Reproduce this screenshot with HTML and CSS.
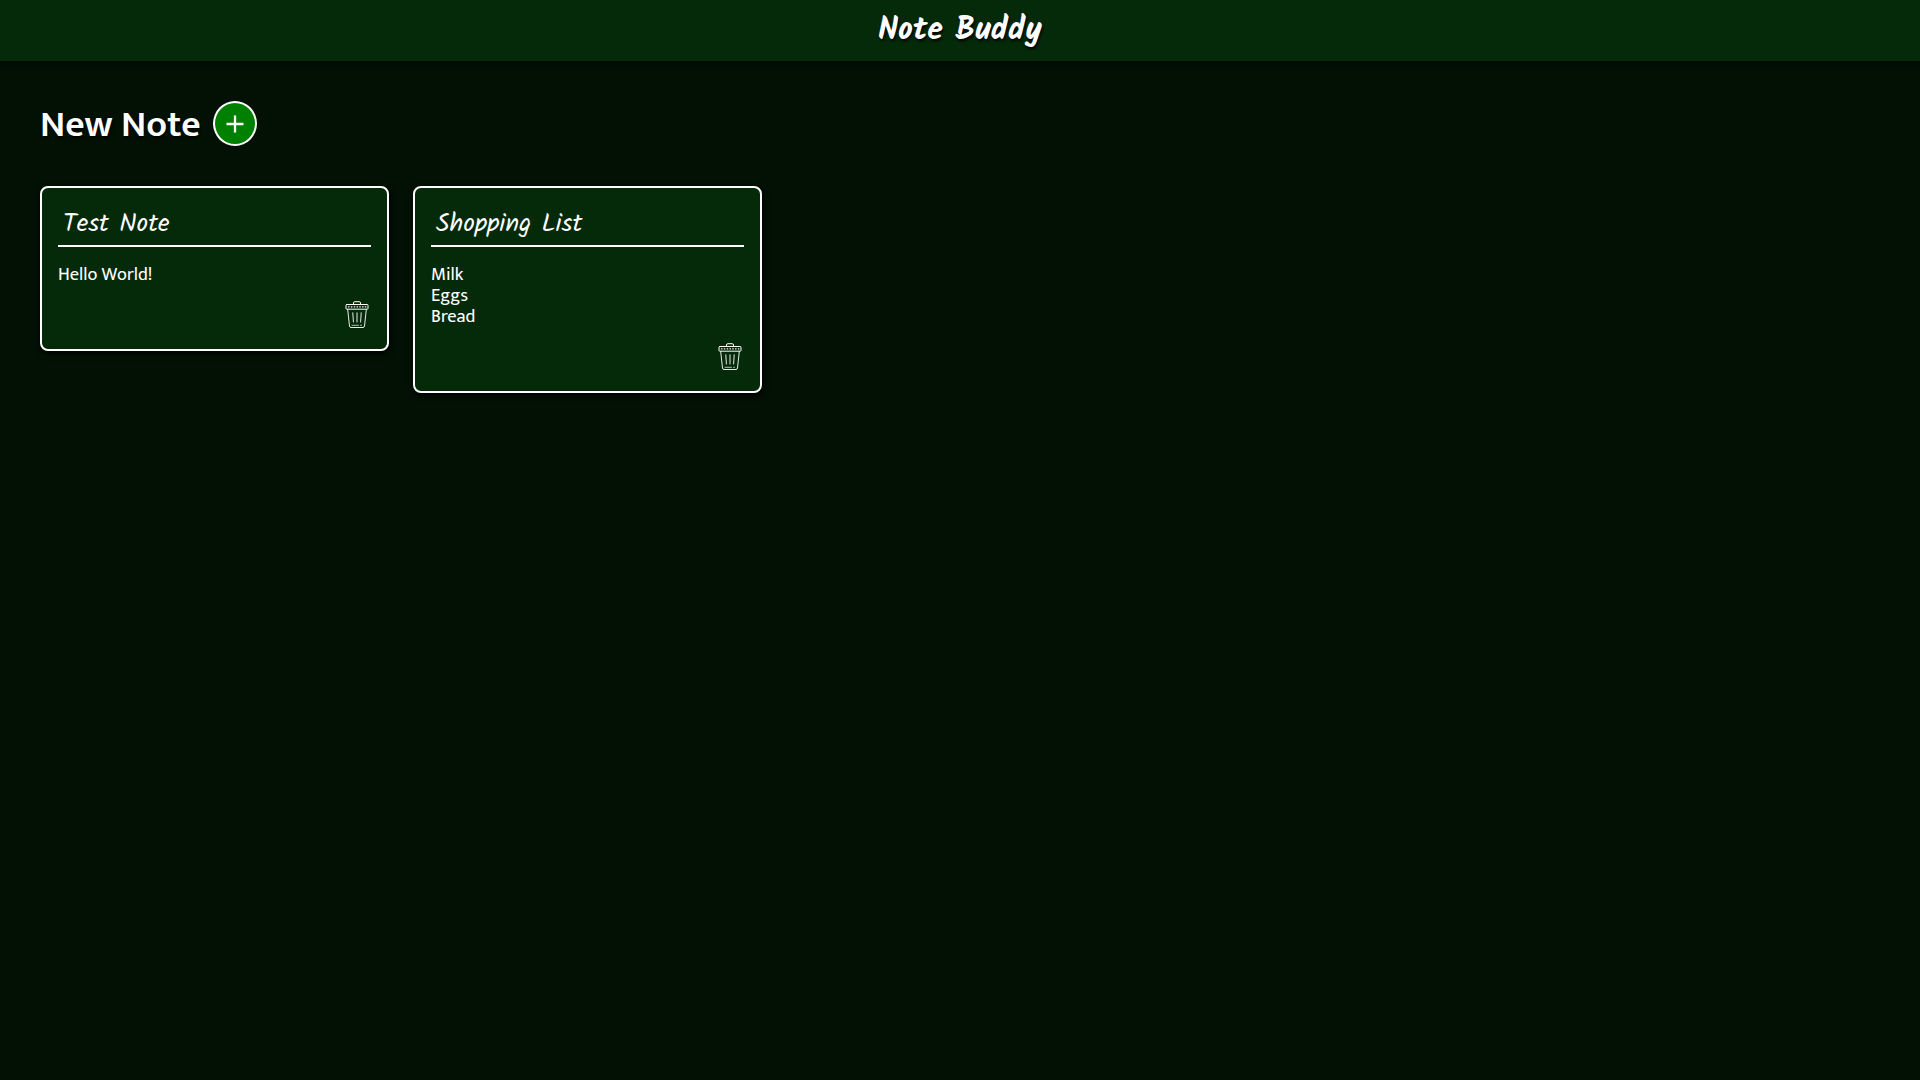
FILE: index.html
```html
<!DOCTYPE html>
<html lang="en">
<head>
<meta charset="utf-8">
<title>Note Buddy</title>
<link rel="stylesheet" href="styles.css">
</head>
<body>
<svg class="defs" width="0" height="0" aria-hidden="true">
  <symbol id="trash" viewBox="0 0 24 28">
    <g fill="none" stroke="#fff" stroke-linecap="round" stroke-linejoin="round">
      <path d="M8.5 3V2q0-1.3 1.3-1.3h4.4q1.3 0 1.3 1.3v1" stroke-width="1"/>
      <rect x="1" y="3.5" width="22" height="4.7" rx=".8" stroke-width="1"/>
      <path d="M3.5 5.8h17.5" stroke-width="1.2" stroke-dasharray=".6 2.2"/>
      <path d="M2.7 8.6 4.5 25q.2 1.5 1.5 1.5h12q1.3 0 1.5-1.5l1.8-16.4" stroke-width=".9"/>
      <path d="M7.8 11.8 8.4 21M12 11.8V21M16.2 11.8 15.6 21" stroke-width=".9"/>
      <path d="M7 24.3h6.5M15.5 24.3h1" stroke-width=".7"/>
    </g>
  </symbol>
</svg>
<header class="header"><h1 class="brand">Note Buddy</h1></header>
<main class="main">
  <div class="new-note">
    <h2 class="new-title">New Note</h2>
    <button class="add" aria-label="Add note"><svg width="18" height="18" viewBox="0 0 18 18"><path d="M.5 9h17M9 .5v17" stroke="#fff" stroke-width="2.3"/></svg></button>
  </div>
  <section class="notes">
    <article class="note">
      <h3 class="note-title">Test Note</h3>
      <p class="note-text">Hello World!</p>
      <div class="note-footer"><svg class="trash"><use href="#trash"/></svg></div>
    </article>
    <article class="note">
      <h3 class="note-title">Shopping List</h3>
      <p class="note-text">Milk<br>Eggs<br>Bread</p>
      <div class="note-footer"><svg class="trash"><use href="#trash"/></svg></div>
    </article>
  </section>
</main>
</body>
</html>
```
FILE: styles.css
```css
* { box-sizing: border-box; margin: 0; padding: 0; }
body { min-height: 100vh; background: #031104; color: #fff; font-family: Mukta, Carlito, Lato, sans-serif; }
.defs { display: block; }
.header { height: 61px; display: flex; justify-content: center; background: #052a0a; box-shadow: 0 2px 5px rgba(0,0,0,.5); }
.brand { font: 700 32px/61px Kalam, Lato, sans-serif; text-shadow: 1px 2px 3px #000; }
.main { padding: 40px; }
.new-note { display: flex; align-items: center; height: 45px; gap: 14px; }
.new-title { width: 159px; padding-top: 2px; font-size: 37.7px; font-weight: 600; line-height: 45px; white-space: nowrap; text-shadow: 1px 2px 3px #000; }
.add { width: 44px; height: 45px; display: flex; align-items: center; justify-content: center; border: 2px solid #fff; border-radius: 50%; background: #008000; }
.notes { display: flex; align-items: flex-start; gap: 24px; margin-top: 40px; }
.note { width: 349px; padding: 16px; border: 2px solid #fff; border-radius: 8px; background: #052a0a; box-shadow: 1px 3px 6px #000; }
.note-title { height: 43px; padding-left: 5px; border-bottom: 2px solid #fff; font: 400 25.6px/41px Kalam, Lato, sans-serif; white-space: nowrap; }
.note-text { margin-top: 17px; font-size: 18.4px; line-height: 21px; }
.note-footer { height: 48px; display: flex; justify-content: flex-end; padding: 15.5px 2px 0 0; }
.trash { width: 24px; height: 28px; }
```
